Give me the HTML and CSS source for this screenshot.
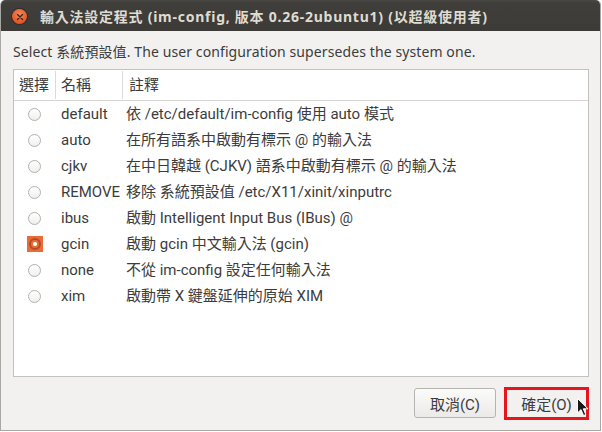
FILE: index.html
```html
<!DOCTYPE html>
<html lang="zh-Hant">
<head>
<meta charset="utf-8">
<title>im-config</title>
<link rel="stylesheet" href="styles.css">
</head>
<body>
<div class="window">
  <div class="titlebar">
    <span class="close"><svg width="8" height="8" viewBox="0 0 8 8"><path d="M1.5 1.5 L6.5 6.5 M6.5 1.5 L1.5 6.5" stroke="#3a2a22" stroke-width="1.4" stroke-linecap="round"/></svg></span>
    <span class="title">輸入法設定程式 (im-config, 版本 0.26-2ubuntu1) (以超級使用者)</span>
  </div>
  <div class="content">
    <div class="label">Select 系統預設值. The user configuration supersedes the system one.</div>
    <div class="list">
      <div class="row head">
        <div class="cell sep">選擇</div>
        <div class="cell sep">名稱</div>
        <div class="cell">註釋</div>
      </div>
      <div class="row"><div class="cell radio-cell"><span class="radio"></span></div><div class="cell">default</div><div class="cell">依 /etc/default/im-config 使用 auto 模式</div></div>
      <div class="row"><div class="cell radio-cell"><span class="radio"></span></div><div class="cell">auto</div><div class="cell">在所有語系中啟動有標示 @ 的輸入法</div></div>
      <div class="row"><div class="cell radio-cell"><span class="radio"></span></div><div class="cell">cjkv</div><div class="cell">在中日韓越 (CJKV) 語系中啟動有標示 @ 的輸入法</div></div>
      <div class="row"><div class="cell radio-cell"><span class="radio"></span></div><div class="cell">REMOVE</div><div class="cell">移除 系統預設值 /etc/X11/xinit/xinputrc</div></div>
      <div class="row"><div class="cell radio-cell"><span class="radio"></span></div><div class="cell">ibus</div><div class="cell">啟動 Intelligent Input Bus (IBus) @</div></div>
      <div class="row"><div class="cell radio-cell"><span class="radio checked"></span></div><div class="cell">gcin</div><div class="cell">啟動 gcin 中文輸入法 (gcin)</div></div>
      <div class="row"><div class="cell radio-cell"><span class="radio"></span></div><div class="cell">none</div><div class="cell">不從 im-config 設定任何輸入法</div></div>
      <div class="row"><div class="cell radio-cell"><span class="radio"></span></div><div class="cell">xim</div><div class="cell">啟動帶 X 鍵盤延伸的原始 XIM</div></div>
    </div>
    <div class="buttons">
      <button class="btn">取消(C)</button>
      <button class="btn ok">確定(O)</button>
    </div>
  </div>
  <svg class="cursor" width="12" height="19" viewBox="0 0 12 19"><path d="M0.5 0.5 L0.5 15 L4 11.6 L6.6 17.6 L8.8 16.6 L6.3 10.8 L11 10.8 Z" fill="#1a1a1a" stroke="#ffffff" stroke-width="1"/></svg>
</div>
</body>
</html>
```
FILE: styles.css
```css
html, body {
  margin: 0;
  padding: 0;
  background: #ffffff;
}
body {
  font-family: "Noto Sans", "Noto Sans CJK TC", sans-serif;
  color: #3c3c3c;
}
.window {
  position: relative;
  width: 601px;
  height: 431px;
  box-sizing: border-box;
  border-left: 1px solid #a9a7a3;
  border-right: 1px solid #a9a7a3;
  border-bottom: 1px solid #a9a7a3;
  border-radius: 5px 5px 0 0;
  background: #f2f1f0;
  display: flex;
  flex-direction: column;
  overflow: hidden;
}
.titlebar {
  height: 31px;
  margin: 0 -1px;
  background: linear-gradient(#4a4945 0px, #3f3e3a 3px, #3c3b37 100%);
  border-radius: 5px 5px 0 0;
  display: flex;
  align-items: center;
  flex: none;
}
.close {
  width: 15px;
  height: 15px;
  margin-left: 12px;
  margin-top: 2px;
  border-radius: 50%;
  background: radial-gradient(circle at 50% 35%, #f58a5a 0%, #ea5f2c 55%, #d2461a 100%);
  box-shadow: 0 0 0 1px #2e2d2a;
  display: flex;
  align-items: center;
  justify-content: center;
}
.title {
  margin-left: 13px;
  margin-top: 1px;
  font-weight: bold;
  font-size: 14px;
  color: #dfdbd2;
  letter-spacing: 0.75px;
  white-space: nowrap;
}
.content {
  flex: 1;
  display: flex;
  flex-direction: column;
  padding: 12px 11px 0 12px;
}
.label {
  font-size: 14px;
  line-height: 18px;
  height: 18px;
  white-space: nowrap;
  letter-spacing: 0.1px;
}
.list {
  margin-top: 8px;
  height: 308px;
  box-sizing: border-box;
  border: 1px solid #c4c2be;
  background: #ffffff;
  font-family: Roboto, "Noto Sans CJK TC", sans-serif;
  font-size: 15px;
}
.row {
  display: grid;
  grid-template-columns: 42px 67px 1fr;
  height: 26px;
  align-items: center;
}
.row.head {
  height: 31px;
  border-bottom: 1px solid #d6d5d3;
  box-sizing: border-box;
  align-items: stretch;
}
.row.head .cell {
  display: flex;
  align-items: center;
  padding-top: 1px;
}
.cell {
  padding-left: 6px;
  white-space: nowrap;
  line-height: 19px;
}
.cell.sep {
  border-right: 1px solid #dcdbd9;
  margin: 1px 0 1px 0;
}
.row .cell:nth-child(2) { padding-left: 5px; }
.row .cell:nth-child(3) { padding-left: 3px; }
.row.head .cell:nth-child(1) { padding-left: 5px; }
.row.head .cell:nth-child(2) { padding-left: 5px; }
.row.head .cell:nth-child(3) { padding-left: 6px; }
.radio-cell {
  display: flex;
  align-items: center;
  padding-left: 14px;
}
.radio {
  width: 13px;
  height: 13px;
  box-sizing: border-box;
  border-radius: 50%;
  border: 1px solid #b2b1ae;
  background: linear-gradient(#ffffff, #f0efee);
  display: block;
}
.radio.checked {
  width: 16px;
  height: 16px;
  margin-left: -1px;
  border-radius: 0;
  border: none;
  background: #e96c37;
  position: relative;
}
.radio.checked::before {
  content: "";
  position: absolute;
  left: 2px;
  top: 2px;
  width: 12px;
  height: 12px;
  box-sizing: border-box;
  border-radius: 50%;
  border: 2px solid #b84a24;
  background: #e4703e;
}
.radio.checked::after {
  content: "";
  position: absolute;
  left: 6px;
  top: 6px;
  width: 4px;
  height: 4px;
  border-radius: 50%;
  background: #ffffff;
}
.buttons {
  margin-top: 11px;
  display: flex;
  justify-content: flex-end;
  gap: 8px;
}
.btn {
  width: 82px;
  height: 30px;
  box-sizing: border-box;
  border: 1px solid #b6b4b0;
  border-radius: 3px;
  background: linear-gradient(#fbfbfa, #ebeae8);
  font-family: Roboto, "Noto Sans CJK TC", sans-serif;
  font-size: 15px;
  color: #3c3c3c;
  padding: 0;
}
.btn.ok {
  width: 85px;
  height: 33px;
  margin-top: -1px;
  margin-right: 0;
  border: 3px solid #e5141d;
  border-radius: 0;
  background: #f2f1f0;
}
.cursor {
  position: absolute;
  left: 576px;
  top: 398px;
}
```
